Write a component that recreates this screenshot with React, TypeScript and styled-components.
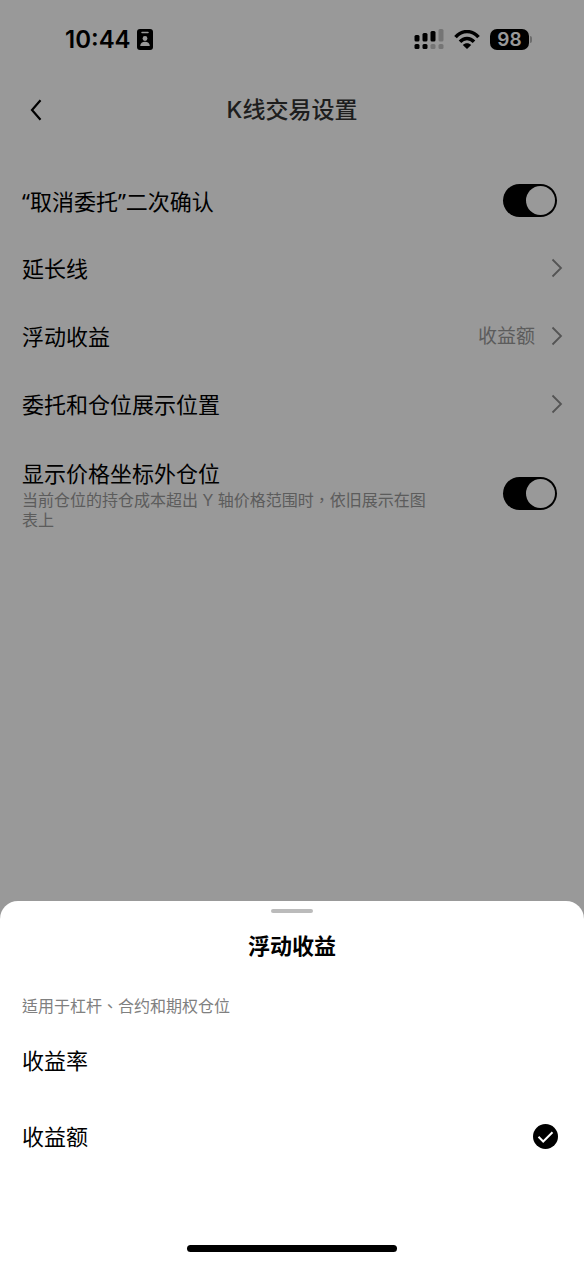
import React, { useState } from "react";
import styled, { createGlobalStyle } from "styled-components";

const GlobalStyle = createGlobalStyle`
  * { box-sizing: border-box; }
  body {
    margin: 0;
    background: #fff;
    color: #000;
    font-family: Inter, "Noto Sans CJK SC", sans-serif;
  }
  button, input { font: inherit; color: inherit; margin: 0; }
`;

const Page = styled.div`
  min-height: 100vh;
  background: #fff;
`;

const StatusBar = styled.div`
  display: flex;
  align-items: center;
  justify-content: space-between;
  height: 78px;
  padding: 0 52px 0 65px;
`;

const StatusGroup = styled.div<{ $gap: number }>`
  display: flex;
  align-items: center;
  gap: ${(p) => p.$gap}px;
`;

const Clock = styled.time`
  padding-top: 2px;
  font-size: 24px;
  line-height: 28px;
  font-weight: 600;
`;

const Battery = styled.div`
  display: flex;
  align-items: center;
  gap: 1px;
`;

const BatteryLevel = styled.span`
  width: 39px;
  border-radius: 7px;
  background: #000;
  color: #fff;
  font-size: 19px;
  line-height: 21px;
  font-weight: 600;
  text-align: center;
`;

const BatteryTip = styled.span`
  width: 2px;
  height: 7px;
  border-radius: 0 2px 2px 0;
  background: #b4b4b4;
`;

const Header = styled.header`
  display: grid;
  grid-template-columns: 48px 1fr 48px;
  align-items: center;
  height: 64px;
  padding: 0 12px;
`;

const BackButton = styled.button`
  display: flex;
  align-items: center;
  justify-content: center;
  height: 48px;
  padding: 0;
  border: 0;
  background: none;
`;

const PageTitle = styled.h1`
  margin: 0;
  color: #333;
  font-size: 23px;
  line-height: 32px;
  font-weight: 500;
  text-align: center;
`;

const Settings = styled.main`
  padding-top: 24px;
`;

const SwitchRow = styled.div`
  display: flex;
  align-items: center;
  justify-content: space-between;
  gap: 24px;
  min-height: 68px;
  padding: 18px 27px 18px 22px;
`;

const LinkRow = styled.button`
  display: flex;
  align-items: center;
  justify-content: space-between;
  width: 100%;
  height: 68px;
  padding: 0 21px 2px 22px;
  border: 0;
  background: none;
  text-align: left;
`;

const LabelBlock = styled.div`
  flex: 1;
  max-width: 412px;
`;

const Label = styled.label`
  display: block;
  font-family: "Noto Sans", "Noto Sans CJK SC", sans-serif;
  font-size: 22px;
  line-height: 32px;
`;

const LinkText = styled.span`
  font-family: "Noto Sans", "Noto Sans CJK SC", sans-serif;
  font-size: 22px;
  line-height: 32px;
`;

const Description = styled.p`
  margin: 1px 0 0;
  color: #999;
  font-family: Inter, "Noto Sans CJK TC", sans-serif;
  font-size: 16px;
  line-height: 20px;
`;

const LinkEnd = styled.span`
  display: flex;
  align-items: center;
  gap: 16px;
  color: #999;
  font-family: "Noto Sans CJK SC", sans-serif;
  font-size: 19px;
  line-height: 24px;
`;

const LinkValue = styled.span`
  padding-bottom: 2px;
`;

const Switch = styled.input`
  appearance: none;
  display: flex;
  flex: none;
  width: 54px;
  height: 33px;
  padding: 2px;
  border-radius: 17px;
  background: #bbb;
  cursor: pointer;

  &::before {
    content: "";
    width: 29px;
    height: 29px;
    border-radius: 50%;
    background: #fff;
  }
  &:checked {
    justify-content: flex-end;
    background: #000;
  }
`;

const Overlay = styled.div`
  position: fixed;
  inset: 0;
  display: flex;
  flex-direction: column;
  justify-content: flex-end;
  background: rgba(0, 0, 0, 0.4);
`;

const Sheet = styled.section`
  display: flex;
  flex-direction: column;
  padding: 8px 0 11px;
  border-radius: 18px 18px 0 0;
  background: #fff;
`;

const Handle = styled.span`
  align-self: center;
  width: 42px;
  height: 4px;
  border-radius: 2px;
  background: #bbb;
`;

const SheetTitle = styled.h2`
  margin: 17px 0 0;
  font-size: 22px;
  line-height: 32px;
  font-weight: 600;
  text-align: center;
`;

const Choices = styled.fieldset`
  min-width: 0;
  margin: 0;
  padding: 32px 0 0;
  border: 0;
`;

const Hint = styled.p`
  margin: 0;
  padding: 0 22px;
  color: #808080;
  font-family: Inter, "Noto Sans CJK TC", sans-serif;
  font-size: 16px;
  line-height: 24px;
`;

const ChoiceList = styled.div`
  padding: 4px 0 71px;
`;

const Choice = styled.label`
  display: flex;
  align-items: center;
  justify-content: space-between;
  height: 76px;
  padding: 0 26px 0 22px;
  font-family: "Noto Sans", "Noto Sans CJK SC", sans-serif;
  font-size: 22px;
  line-height: 32px;
  cursor: pointer;
`;

const ChoiceMark = styled.span`
  display: grid;

  & > * { grid-area: 1 / 1; }
`;

const Radio = styled.input`
  appearance: none;
  width: 25px;
  height: 25px;
  border-radius: 50%;

  & + svg { visibility: hidden; pointer-events: none; }
  &:checked + svg { visibility: visible; }
`;

const HomeIndicator = styled.span`
  align-self: center;
  width: 36%;
  height: 7px;
  border-radius: 4px;
  background: #000;
`;

const Chevron = () => (
  <svg width="12" height="20" viewBox="0 0 12 20" fill="none" aria-hidden="true">
    <path d="M1.5 1.5 10 10l-8.500 8.500" stroke="#8c8c8c" strokeWidth="1.8" />
  </svg>
);

const BackIcon = () => (
  <svg width="12" height="22" viewBox="0 0 12 22" fill="none" aria-hidden="true">
    <path d="M10.500 1.200 2 11l8.500 9.800" stroke="#000" strokeWidth="2.200" />
  </svg>
);

const BadgeIcon = () => (
  <svg width="16" height="21" viewBox="0 0 16 21" aria-hidden="true">
    <rect width="16" height="21" rx="3" fill="#000" />
    <path d="M5 3.500h6" stroke="#fff" strokeWidth="1.500" strokeLinecap="round" />
    <circle cx="8" cy="9.500" r="2.400" fill="#fff" />
    <path d="M3.200 17c.2-3 2-4.300 4.800-4.300s4.600 1.300 4.800 4.300z" fill="#fff" />
  </svg>
);

const SignalIcon = () => (
  <svg width="30" height="21" viewBox="0 0 30 21" aria-hidden="true">
    <g fill="#000">
      <rect x="0.500" y="6" width="5" height="6.500" rx="1.500" />
      <rect x="8.500" y="4" width="5" height="8.500" rx="1.500" />
      <rect x="16.500" y="2" width="5" height="10.500" rx="1.500" />
      <rect x="0.500" y="15" width="5" height="5" rx="1.500" />
      <rect x="8.500" y="15" width="5" height="5" rx="1.500" />
    </g>
    <g fill="#c4c4c4">
      <rect x="24.500" y="0" width="5" height="12.500" rx="1.500" />
      <rect x="16.500" y="15" width="5" height="5" rx="1.500" />
      <rect x="24.500" y="15" width="5" height="5" rx="1.500" />
    </g>
  </svg>
);

const WifiIcon = () => (
  <svg width="26" height="19" viewBox="0 0 26 19" fill="none" aria-hidden="true">
    <path d="M1.500 7.200C8-0.300 18-0.300 24.500 7.200" stroke="#000" strokeWidth="3.500" />
    <path d="M6 11.700c4-4.400 10-4.400 14 0" stroke="#000" strokeWidth="3.500" />
    <path d="M8.800 14.900c2.300-2.300 6.100-2.300 8.400 0L13 19z" fill="#000" />
  </svg>
);

const CheckIcon = () => (
  <svg width="25" height="25" viewBox="0 0 25 25" fill="none" aria-hidden="true">
    <circle cx="12.500" cy="12.500" r="12.500" fill="#000" />
    <path d="m5.500 12.800 4.700 4.700 9.300-9.300" stroke="#fff" strokeWidth="2" />
  </svg>
);

const OPTIONS = ["收益率", "收益额"];

export default function App() {
  const [metric, setMetric] = useState("收益额");

  return (
    <>
      <GlobalStyle />
      <Page lang="zh-CN">
        <StatusBar>
          <StatusGroup $gap={6}>
            <Clock>10:44</Clock>
            <BadgeIcon />
          </StatusGroup>
          <StatusGroup $gap={10}>
            <SignalIcon />
            <WifiIcon />
            <Battery>
              <BatteryLevel>98</BatteryLevel>
              <BatteryTip />
            </Battery>
          </StatusGroup>
        </StatusBar>
        <Header>
          <BackButton type="button" aria-label="返回">
            <BackIcon />
          </BackButton>
          <PageTitle>K线交易设置</PageTitle>
        </Header>
        <Settings>
          <SwitchRow>
            <Label htmlFor="confirm-cancel">“取消委托”二次确认</Label>
            <Switch id="confirm-cancel" type="checkbox" defaultChecked />
          </SwitchRow>
          <LinkRow type="button">
            <LinkText>延长线</LinkText>
            <Chevron />
          </LinkRow>
          <LinkRow type="button">
            <LinkText>浮动收益</LinkText>
            <LinkEnd>
              <LinkValue>{metric}</LinkValue>
              <Chevron />
            </LinkEnd>
          </LinkRow>
          <LinkRow type="button">
            <LinkText>委托和仓位展示位置</LinkText>
            <Chevron />
          </LinkRow>
          <SwitchRow>
            <LabelBlock>
              <Label htmlFor="outside-positions">显示价格坐标外仓位</Label>
              <Description lang="zh-TW">
                当前仓位的持仓成本超出 Y 轴价格范围时，依旧展示在图表上
              </Description>
            </LabelBlock>
            <Switch id="outside-positions" type="checkbox" defaultChecked />
          </SwitchRow>
        </Settings>
      </Page>
      <Overlay lang="zh-CN">
        <Sheet role="dialog" aria-modal="true" aria-labelledby="sheet-title">
          <Handle />
          <SheetTitle id="sheet-title">浮动收益</SheetTitle>
          <Choices aria-labelledby="sheet-title">
            <Hint lang="zh-TW">适用于杠杆、合约和期权仓位</Hint>
            <ChoiceList>
              {OPTIONS.map((option) => (
                <Choice key={option}>
                  {option}
                  <ChoiceMark>
                    <Radio
                      type="radio"
                      name="metric"
                      value={option}
                      checked={metric === option}
                      onChange={() => setMetric(option)}
                    />
                    <CheckIcon />
                  </ChoiceMark>
                </Choice>
              ))}
            </ChoiceList>
          </Choices>
          <HomeIndicator />
        </Sheet>
      </Overlay>
    </>
  );
}
